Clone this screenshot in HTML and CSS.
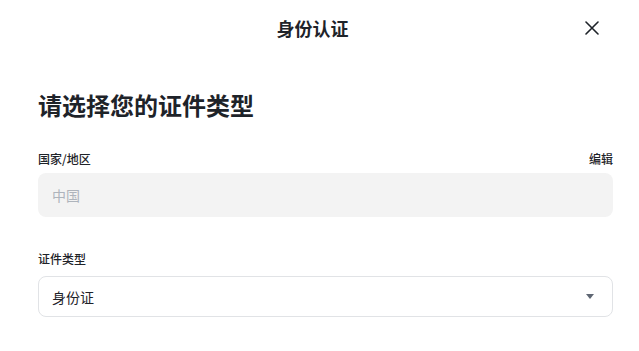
FILE: index.html
```html
<!DOCTYPE html>
<html lang="zh-CN">
<head>
    <meta charset="UTF-8">
    <meta name="viewport" content="width=device-width, initial-scale=1.0">
    <title>身份认证</title>
    <link rel="stylesheet" href="styles.css">
</head>
<body>
    <header class="modal-head">
        <span></span>
        <h2 class="modal-head__title">身份认证</h2>
        <button class="modal-head__close" aria-label="关闭">
            <svg width="14" height="14" viewBox="0 0 14 14">
                <path d="M1 1L13 13M13 1L1 13" stroke="#1e2329" stroke-width="1.6" stroke-linecap="round"/>
            </svg>
        </button>
    </header>

    <div class="kyc">
        <h1 class="kyc__title">请选择您的证件类型</h1>

        <div class="kyc__row">
            <span class="kyc__label">国家/地区</span>
            <a class="kyc__edit" href="#">编辑</a>
        </div>
        <div class="kyc__field kyc__field--disabled">中国</div>

        <div class="kyc__row kyc__row--second">
            <span class="kyc__label">证件类型</span>
        </div>
        <div class="kyc__field kyc__field--select">
            <span>身份证</span>
            <i class="caret"></i>
        </div>
    </div>
</body>
</html>
```

FILE: styles.css
```css
html, body{
    margin: 0;
    background-color: #fff;
    font-family: "Noto Sans CJK SC", "Noto Sans", sans-serif;
    color: #1e2329;
}
.modal-head{
    width: 625px;
    display: grid;
    grid-template-columns: 1fr auto 1fr;
    align-items: center;
    padding: 16px 21px 0;
    box-sizing: border-box;
}
.modal-head__title{
    margin: 0;
    font-size: 18px;
    line-height: 24px;
    font-weight: bold;
}
.modal-head__close{
    justify-self: end;
    width: 24px;
    height: 24px;
    padding: 0;
    border: none;
    background-color: transparent;
    display: flex;
    align-items: center;
    justify-content: center;
    cursor: pointer;
}
.kyc{
    width: 575px;
    margin-left: 38px;
}
.kyc__title{
    margin: 49px 0 0;
    font-size: 24px;
    line-height: 32px;
    font-weight: bold;
}
.kyc__row{
    display: flex;
    justify-content: space-between;
    align-items: center;
    margin-top: 30px;
    height: 16px;
}
.kyc__row--second{
    margin-top: 34px;
}
.kyc__label{
    font-size: 12px;
    line-height: 16px;
    font-weight: 500;
}
.kyc__edit{
    font-size: 12px;
    line-height: 16px;
    font-weight: 500;
    color: #1e2329;
    text-decoration: none;
}
.kyc__field{
    box-sizing: border-box;
    display: flex;
    align-items: center;
    justify-content: space-between;
    font-size: 14px;
    border-radius: 8px;
}
.kyc__field--disabled{
    margin-top: 6px;
    height: 44px;
    padding: 0 14px;
    background-color: #f3f3f3;
    color: #aeb4bc;
}
.kyc__field--select{
    margin-top: 9px;
    height: 41px;
    padding: 0 18px 0 13px;
    border: 1px solid #e1e3e6;
    color: #1e2329;
}
.caret{
    width: 0;
    height: 0;
    border-left: 4px solid transparent;
    border-right: 4px solid transparent;
    border-top: 5px solid #5e6673;
}
```
